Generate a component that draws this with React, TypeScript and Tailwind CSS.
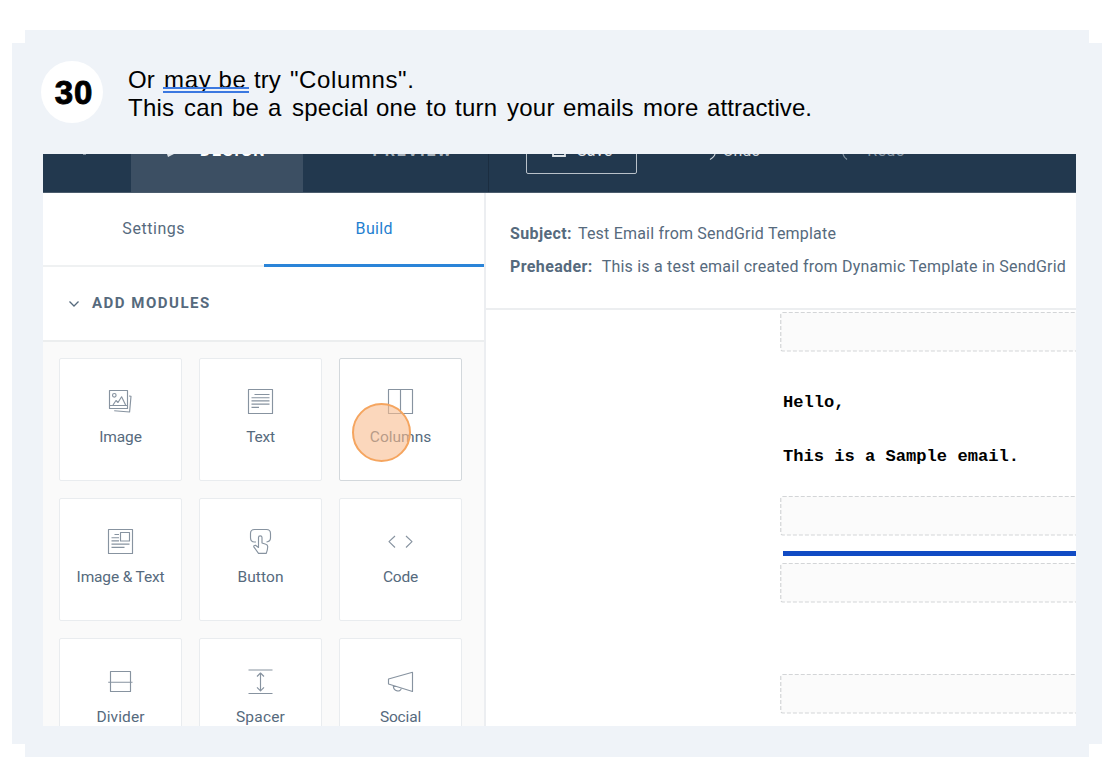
import React from "react";

type Word = { text: string; width: string; track?: string };

const lineTwo: Word[] = [
  { text: "This", width: "w-[56px]" },
  { text: "can", width: "w-[48px]" },
  { text: "be", width: "w-[36px]" },
  { text: "a", width: "w-[24px]" },
  { text: "special", width: "w-[84px]" },
  { text: "one", width: "w-[50px]" },
  { text: "to", width: "w-[29px]" },
  { text: "turn", width: "w-[52px]" },
  { text: "your", width: "w-[56px]" },
  { text: "emails", width: "w-[80px]" },
  { text: "more", width: "w-[64px]" },
  { text: "attractive.", width: "w-[110px]", track: "tracking-[0.1px]" },
];

function Glyph({ children }: { children: React.ReactNode }) {
  return (
    <svg
      className="-ml-[2px]"
      width="28"
      height="28"
      viewBox="0 0 28 28"
      fill="none"
      stroke="#8793a0"
      strokeWidth="1.15"
      strokeLinejoin="round"
    >
      {children}
    </svg>
  );
}

const modules: { label: string; icon: React.ReactNode; active?: boolean; track: string }[] = [
  {
    label: "Image",
    track: "tracking-[-0.1px]",
    icon: (
      <Glyph>
        <path d="M3.500 3.500H21.500V21.500H3.500ZM3.500 18.500H21.500" />
        <circle cx="8.300" cy="8.300" r="1.800" />
        <path d="M7 18l3-4.500 2 2 3.600-5.700 4 8.200M23 9l2 .3-1.400 15.700L8.200 23.800" />
      </Glyph>
    ),
  },
  {
    label: "Text",
    track: "tracking-[-0.2px]",
    icon: (
      <Glyph>
        <path d="M2.500 2.500H26.500V26.500H2.500ZM8.500 7.500H23.500M5.500 10.700H23.500M5.500 13.900H23.500M5.500 17.100H23.500M5.500 20.300H13" />
      </Glyph>
    ),
  },
  {
    label: "Columns",
    active: true,
    track: "tracking-[0px]",
    icon: (
      <Glyph>
        <path d="M2.500 2.500H26.500V26.500H2.500ZM14.500 2.500V26.500" />
      </Glyph>
    ),
  },
  {
    label: "Image & Text",
    track: "tracking-[-0.15px]",
    icon: (
      <Glyph>
        <path d="M2.500 2.500H26.500V26.500H2.500ZM14.500 5.500H23.500V14H14.500ZM8.500 7.500H13M5.500 10.700H13M5.500 13.900H13M5.500 17.100H23.500M5.500 20.300H18.500" />
      </Glyph>
    ),
  },
  {
    label: "Button",
    track: "tracking-[0.1px]",
    icon: (
      <Glyph>
        <path d="M10 15H8.500Q4.500 15 4.500 10.500V6.500Q4.500 2.500 8.500 2.500H20.500Q24.500 2.500 24.500 6.500V11Q24.500 14.500 20.500 15" />
        <path d="M12.500 20.500V10.500Q12.500 8.800 14.200 8.800Q16 8.800 16 10.500V16L19.800 17.200Q21.900 17.800 21.700 20Q21.500 23.500 20.300 26.300H12.500L7.800 19.800Q7.500 18.200 9.500 18.300Z" />
      </Glyph>
    ),
  },
  {
    label: "Code",
    track: "tracking-[-0.2px]",
    icon: (
      <Glyph>
        <path d="M9 9L3 14.700L9 20.500M20 9L26 14.700L20 20.500" />
      </Glyph>
    ),
  },
  {
    label: "Divider",
    track: "tracking-[0.1px]",
    icon: (
      <Glyph>
        <path d="M4.500 4.500H24.500V24.500H4.500ZM2.200 15.200H26.500" />
      </Glyph>
    ),
  },
  {
    label: "Spacer",
    track: "tracking-[0.2px]",
    icon: (
      <Glyph>
        <path d="M2.500 3H26.500M2.500 26.500H26.500M14.500 6V23.800M11 9.500L14.500 6L18 9.500M11 20.300L14.500 23.800L18 20.300" />
      </Glyph>
    ),
  },
  {
    label: "Social",
    track: "tracking-[-0.15px]",
    icon: (
      <Glyph>
        <path d="M2.500 12L26.500 5.300V24.500L2.500 17ZM7.300 18.600C7.300 25 15 25.500 15.300 21" />
      </Glyph>
    ),
  },
];

function Zone({ className }: { className: string }) {
  return (
    <svg className={`block shrink-0 ${className}`} width="310" height="40" fill="none">
      <rect x="0.75" y="0.5" width="330" height="38.5" rx="2" fill="#fbfbfb" stroke="#d3d5d7" strokeWidth="1.2" strokeDasharray="4 2" />
    </svg>
  );
}

function NavBar() {
  return (
    <div className="flex h-[39px] shrink-0 overflow-hidden border-b border-[#4b5c6d] bg-[#22384e] text-[16px] leading-5 text-white">
      <div className="w-[88px] pl-[40px]">
        <div className="h-px w-[3px] bg-[#7b8a98]" />
      </div>
      <div className="flex w-[171.500px] justify-start bg-[#3c4f63] pl-[35px]">
        <svg width="12" height="7" className="shrink-0" fill="#dfe4e8">
          <path d="M1 0H8L2 3Z" />
        </svg>
        <span className="-mt-[13px] ml-[22px] font-bold tracking-[1.700px]">DESIGN</span>
      </div>
      <div className="flex w-[186.500px] border-r border-[#1b2d40] pl-[70px]">
        <span className="-mt-[13px] font-bold tracking-[1.850px] text-[#a5afb9]">PREVIEW</span>
      </div>
      <div className="-mt-[24px] ml-[37px] flex h-[44px] w-[111px] rounded-[2px] border-[1.500px] border-[#b9c1c9] pl-[25px]">
        <svg width="14" height="27" fill="none" stroke="#dfe4e8" strokeWidth="1.800">
          <path d="M1 12V25H13V12" />
        </svg>
        <span className="mt-[10px] ml-[11px] tracking-[0.300px] text-[#e1e5e9]">Save</span>
      </div>
      <div className="flex pl-[72px]">
        <svg width="8" height="8" fill="none" stroke="#ccd3d9" strokeWidth="1.200">
          <path d="M6 0Q5.500 3 1 5.500" />
        </svg>
        <span className="-mt-[13px] ml-[6px] text-[#ccd3d9]">Undo</span>
      </div>
      <div className="flex pl-[81px]">
        <svg width="8" height="8" fill="none" stroke="#8292a1" strokeWidth="1.200">
          <path d="M2 0Q2.500 3 6 5.500" />
        </svg>
        <span className="-mt-[13px] ml-[18px] tracking-[0.300px] text-[#8292a1]">Redo</span>
      </div>
    </div>
  );
}

function Sidebar() {
  return (
    <div className="flex w-[443px] shrink-0 flex-col border-r-2 border-[#eceef1] bg-[#fafafa]">
      <div className="flex h-[74px] shrink-0 bg-white text-[16px] tracking-[0.550px]">
        <div className="flex w-[220.500px] items-center justify-center border-b-2 border-[#eff1f2] pl-px">Settings</div>
        <div className="flex flex-1 items-center justify-center border-b-[3px] border-[#2a84d8] pt-px pl-px tracking-[0.350px] text-[#1f80d0]">
          Build
        </div>
      </div>
      <div className="flex h-[75px] shrink-0 items-center border-b-2 border-[#eceeef] bg-white pl-[25px]">
        <svg width="12" height="8" fill="none" stroke="#566a7d" strokeWidth="1.300">
          <path d="M1.500 1.500L6 6L10.500 1.500" />
        </svg>
        <span className="ml-[12px] text-[15px] font-bold tracking-[1.500px]">ADD MODULES</span>
      </div>
      <div className="grid grid-cols-[123px_123px_123px] gap-[17px] pt-[16px] pl-[16px]">
        {modules.map((m) => (
          <div
            key={m.label}
            className={`relative flex h-[123px] flex-col items-center rounded-[2px] border-[1.500px] bg-white pt-[28px] ${
              m.active ? "border-[#d3d8dc]" : "border-[#e9ecef]"
            }`}
          >
            {m.icon}
            <span className={`mt-[11.500px] text-[15.500px] leading-5 whitespace-nowrap ${m.track}`}>{m.label}</span>
            {m.active && (
              <div className="absolute top-[44px] left-[12px] h-[59px] w-[59px] rounded-full border-2 border-[#f5a55f] bg-[#f9bd90]/60" />
            )}
          </div>
        ))}
      </div>
    </div>
  );
}

function Preview() {
  return (
    <div className="flex min-w-0 flex-1 flex-col">
      <div className="flex h-[117px] shrink-0 flex-col border-b-2 border-[#eceef0] pt-[24px] pl-[24px] text-[16px] whitespace-nowrap">
        <div className="flex h-[33px] items-center">
          <b className="tracking-[0.380px]">Subject:</b>
          <span className="ml-[6px] tracking-[0.200px]">Test Email from SendGrid Template</span>
        </div>
        <div className="flex h-[33px] items-center">
          <b className="tracking-[0.380px]">Preheader:</b>
          <span className="ml-[9px] tracking-[0.220px]">This is a test email created from Dynamic Template in SendGrid</span>
        </div>
      </div>
      <div className="flex flex-1 flex-col overflow-hidden pl-[294px] font-['Liberation_Mono',monospace] text-[17.100px] leading-[20px] font-bold text-black">
        <Zone className="mt-[2px]" />
        <p className="mt-[41px] ml-[3px]">Hello,</p>
        <p className="mt-[34px] ml-[3px] whitespace-nowrap">This is a Sample email.</p>
        <Zone className="mt-[29px]" />
        <div className="mt-[15px] ml-[3px] h-[5px] shrink-0 bg-[#114bc4]" />
        <Zone className="mt-[7px]" />
        <Zone className="mt-[71px]" />
      </div>
    </div>
  );
}

export default function App() {
  return (
    <div className="flex h-[782px] w-[1118px] flex-col overflow-hidden bg-white pt-[30px] pl-[12px]">
      <div className="ml-[13px] h-[13px] w-[1064px] shrink-0 bg-[#eff3f8]" />
      <div className="flex h-[701px] w-[1090px] shrink-0 flex-col bg-[#eff3f8] pl-[31px]">
        <div className="flex h-[111px] shrink-0 items-start font-['Liberation_Sans',sans-serif] text-black">
          <div className="mt-[18px] -ml-[2px] flex h-[62px] w-[62px] items-center justify-center rounded-full bg-white pt-[2px] pl-[4px] text-[33px] font-bold tracking-[1px] [-webkit-text-stroke:0.900px_black]">
            30
          </div>
          <div className="mt-[23px] ml-[25px] text-[24px] leading-[28px] whitespace-nowrap">
            <div className="flex">
              <span className="w-[36px]">Or</span>
              <span className="relative mr-[5.500px] w-[84.500px] tracking-[0.650px]">
                may be
                <span className="absolute top-[21px] left-[-1px] h-[6px] w-[86px] border-y-2 border-[#3b78e0]" />
              </span>
              <span className="w-[36px]">try</span>
              <span className="tracking-[0.600px]">"Columns".</span>
            </div>
            <div className="flex">
              {lineTwo.map((w) => (
                <span key={w.text} className={`${w.width} ${w.track ?? "tracking-[0.250px]"}`}>
                  {w.text}
                </span>
              ))}
            </div>
          </div>
        </div>
        <div className="flex h-[572px] w-[1032.500px] shrink-0 flex-col overflow-hidden bg-white font-['Roboto',sans-serif] text-[#566a7d]">
          <NavBar />
          <div className="flex min-h-0 flex-1">
            <Sidebar />
            <Preview />
          </div>
        </div>
      </div>
      <div className="ml-[13px] h-[13px] w-[1064px] shrink-0 bg-[#eff3f8]" />
    </div>
  );
}
